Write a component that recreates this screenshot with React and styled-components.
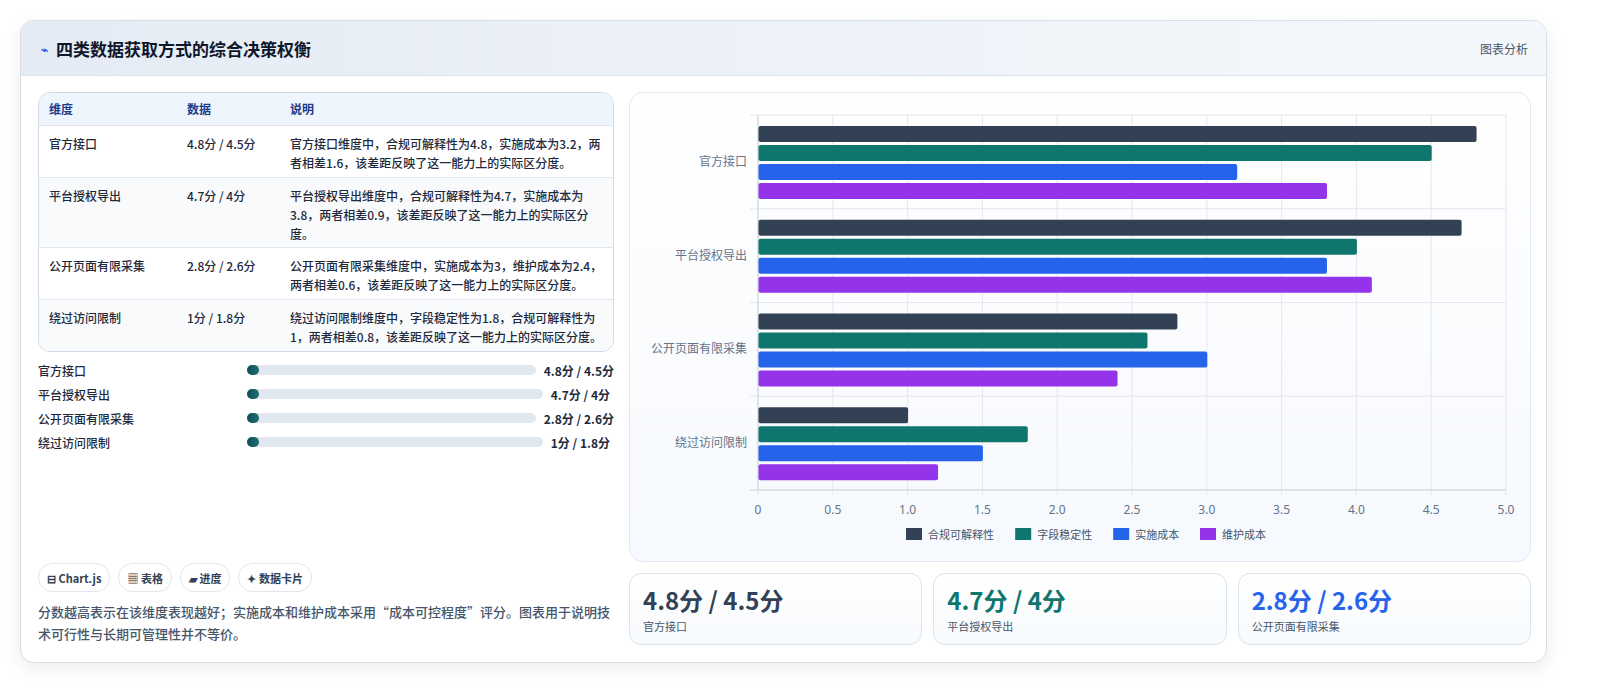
import React from 'react';
import styled, { createGlobalStyle } from 'styled-components';

const Global = createGlobalStyle`
  body { margin: 0; background: #fff; font-family: "Noto Sans CJK SC", "Noto Sans", sans-serif; color: #1e293b; }
`;

const Page = styled.div`
  padding: 20px 0 34px 20px;
`;

const Card = styled.div`
  width: 1527px;
  box-sizing: border-box;
  border: 1px solid #d7dee8;
  border-radius: 14px;
  box-shadow: 0 6px 18px rgba(15, 23, 42, 0.08);
  overflow: hidden;
  background: #fff;
`;

const Header = styled.div`
  height: 54px;
  display: flex;
  align-items: center;
  justify-content: space-between;
  padding: 0 18px 0 20px;
  background: linear-gradient(90deg, #e5ebf4, #f1f5fa 70%, #f4f7fb);
  border-bottom: 1px solid #dbe3ee;
`;

const Title = styled.h2`
  margin: 0;
  font-size: 17px;
  font-weight: 700;
  color: #0f172a;
  display: flex;
  align-items: center;
  gap: 8px;
  span { color: #2563eb; font-size: 12px; }
`;

const HeaderTag = styled.div`
  font-size: 12px;
  color: #475569;
`;

const Body = styled.div`
  display: grid;
  grid-template-columns: 576px 1fr;
  gap: 15px;
  padding: 16px 17px 17px 17px;
`;

const Left = styled.div`
  display: flex;
  flex-direction: column;
`;

const Table = styled.div`
  border: 1px solid #cfdbe9;
  border-radius: 12px;
  overflow: hidden;
  font-size: 12px;
`;

const TRow = styled.div`
  display: grid;
  grid-template-columns: 138px 103px 1fr;
  padding: ${p => (p.$head ? '6px 10px' : '8px 10px')};
  background: ${p => (p.$head ? '#eef5fd' : p.$alt ? '#f8fafc' : '#fff')};
  color: ${p => (p.$head ? '#1e3a8a' : '#1e293b')};
  font-weight: ${p => (p.$head ? 600 : 500)};
  border-top: ${p => (p.$head ? 'none' : '1px solid #dfe6ef')};
  line-height: 19px;
  height: ${p => p.$h}px;
  box-sizing: border-box;
`;

const Bars = styled.div`
  margin-top: 9px;
  display: flex;
  flex-direction: column;
  gap: 6px;
`;

const BarRow = styled.div`
  display: flex;
  align-items: center;
  font-size: 12px;
  height: 18px;
`;

const BarLabel = styled.div`
  width: 209px;
  color: #1e293b;
  font-weight: 500;
`;

const Track = styled.div`
  flex: 1;
  height: 10px;
  background: #e2e8f0;
  border-radius: 5px;
  margin-right: 8px;
`;

const Fill = styled.div`
  height: 100%;
  border-radius: 5px;
  background: linear-gradient(90deg, #0f4c5c, #1f6f6a);
`;

const BarVal = styled.div`
  font-weight: 700;
  color: #1e293b;
  white-space: nowrap;
  margin-right: ${p => p.$mr || 0}px;
`;

const Chips = styled.div`
  margin-top: auto;
  display: flex;
  gap: 8px;
`;

const Chip = styled.div`
  height: 27px;
  padding: 0 8px;
  border: 1px solid #dfe6ef;
  border-radius: 14px;
  display: flex;
  align-items: center;
  font-size: 11px;
  font-weight: 600;
  color: #334155;
`;

const Note = styled.p`
  margin: 9px 0 0;
  font-size: 13px;
  line-height: 22px;
  color: #475569;
  font-weight: 500;
`;

const Right = styled.div`
  display: flex;
  flex-direction: column;
  gap: 11px;
`;

const ChartPanel = styled.div`
  height: 470px;
  border: 1px solid #e2e8f0;
  border-radius: 14px;
  background: linear-gradient(180deg, #ffffff, #f6f9fd);
  box-sizing: border-box;
`;

const Stats = styled.div`
  display: grid;
  grid-template-columns: repeat(3, 1fr);
  gap: 11px;
`;

const Stat = styled.div`
  height: 72px;
  border: 1px solid #dbe5f1;
  border-radius: 12px;
  background: linear-gradient(180deg, #ffffff, #f7fafd);
  padding: 10px 13px;
  box-sizing: border-box;
`;

const StatNum = styled.div`
  font-size: 24px;
  font-weight: 700;
  line-height: 32px;
  color: ${p => p.$c};
`;

const StatLabel = styled.div`
  font-size: 11px;
  color: #475569;
  margin-top: 2px;
`;

const rows = [
  ['官方接口', '4.8分 / 4.5分', '官方接口维度中，合规可解释性为4.8，实施成本为3.2，两者相差1.6，该差距反映了这一能力上的实际区分度。', 52],
  ['平台授权导出', '4.7分 / 4分', '平台授权导出维度中，合规可解释性为4.7，实施成本为3.8，两者相差0.9，该差距反映了这一能力上的实际区分度。', 70],
  ['公开页面有限采集', '2.8分 / 2.6分', '公开页面有限采集维度中，实施成本为3，维护成本为2.4，两者相差0.6，该差距反映了这一能力上的实际区分度。', 52],
  ['绕过访问限制', '1分 / 1.8分', '绕过访问限制维度中，字段稳定性为1.8，合规可解释性为1，两者相差0.8，该差距反映了这一能力上的实际区分度。', 52],
];

const series = [
  { name: '合规可解释性', color: '#334155', v: [4.8, 4.7, 2.8, 1] },
  { name: '字段稳定性', color: '#0f766e', v: [4.5, 4, 2.6, 1.8] },
  { name: '实施成本', color: '#2563eb', v: [3.2, 3.8, 3, 1.5] },
  { name: '维护成本', color: '#9333ea', v: [3.8, 4.1, 2.4, 1.2] },
];

const Chart = () => {
  const x0 = 128, x1 = 876, y0 = 22, y1 = 397;
  const sx = v => x0 + (v / 5) * (x1 - x0);
  const ch = (y1 - y0) / 4;
  const ticks = [0, 0.5, 1, 1.5, 2, 2.5, 3, 3.5, 4, 4.5, 5];
  return (
    <svg width="900" height="468" style={{ display: 'block' }}>
      {ticks.map(t => (
        <g key={t}>
          <line x1={sx(t)} x2={sx(t)} y1={y0} y2={y1 + 5} stroke="#e5e7eb" />
          <text x={sx(t)} y={421} fontSize="12" fill="#64748b" textAnchor="middle" fontFamily="Noto Sans, sans-serif">{t === 0 ? '0' : t.toFixed(1)}</text>
        </g>
      ))}
      {[0, 1, 2, 3, 4].map(i => (
        <line key={i} x1={x0 - 8} x2={x1} y1={y0 + i * ch} y2={y0 + i * ch} stroke="#e5e7eb" />
      ))}
      <line x1={x0} x2={x0} y1={y0} y2={y1} stroke="#cbd5e1" />
      <line x1={x0 - 8} x2={x1} y1={y1} y2={y1} stroke="#cbd5e1" />
      {rows.map((r, i) => (
        <text key={r[0]} x={117} y={y0 + i * ch + ch / 2 + 4} fontSize="12" fill="#64748b" textAnchor="end">{r[0]}</text>
      ))}
      {series.map((s, si) => s.v.map((v, i) => (
        <rect key={si + '-' + i} x={x0 + 0.5} y={y0 + i * ch + 11 + si * 19} width={sx(v) - x0} height="16" fill={s.color} rx="2" />
      )))}
      {(() => {
        let x = 276;
        return series.map(s => {
          const g = (
            <g key={s.name}>
              <rect x={x} y={435} width="16" height="12" fill={s.color} />
              <text x={x + 22} y={446} fontSize="11" fill="#475569">{s.name}</text>
            </g>
          );
          x += 30 + s.name.length * 11.2 + 12;
          return g;
        });
      })()}
    </svg>
  );
};

export default function App() {
  return (
    <>
      <Global />
      <Page>
        <Card>
          <Header>
            <Title><span>⌁</span>四类数据获取方式的综合决策权衡</Title>
            <HeaderTag>图表分析</HeaderTag>
          </Header>
          <Body>
            <Left>
              <Table>
                <TRow $head $h={32}><div>维度</div><div>数据</div><div>说明</div></TRow>
                {rows.map((r, i) => (
                  <TRow key={r[0]} $alt={i % 2 === 1} $h={r[3]}>
                    <div>{r[0]}</div><div>{r[1]}</div><div>{r[2]}</div>
                  </TRow>
                ))}
              </Table>
              <Bars>
                {rows.map((r, i) => (
                  <BarRow key={r[0]}>
                    <BarLabel>{r[0]}</BarLabel>
                    <Track><Fill style={{ width: 12 }} /></Track>
                    <BarVal $mr={i % 2 ? 4 : 0}>{r[1]}</BarVal>
                  </BarRow>
                ))}
              </Bars>
              <Chips>
                <Chip>⊟ Chart.js</Chip>
                <Chip>▦ 表格</Chip>
                <Chip>▰ 进度</Chip>
                <Chip>✦ 数据卡片</Chip>
              </Chips>
              <Note>分数越高表示在该维度表现越好；实施成本和维护成本采用“成本可控程度”评分。图表用于说明技术可行性与长期可管理性并不等价。</Note>
            </Left>
            <Right>
              <ChartPanel><Chart /></ChartPanel>
              <Stats>
                <Stat><StatNum $c="#334155">4.8分 / 4.5分</StatNum><StatLabel>官方接口</StatLabel></Stat>
                <Stat><StatNum $c="#0f766e">4.7分 / 4分</StatNum><StatLabel>平台授权导出</StatLabel></Stat>
                <Stat><StatNum $c="#2563eb">2.8分 / 2.6分</StatNum><StatLabel>公开页面有限采集</StatLabel></Stat>
              </Stats>
            </Right>
          </Body>
        </Card>
      </Page>
    </>
  );
}
